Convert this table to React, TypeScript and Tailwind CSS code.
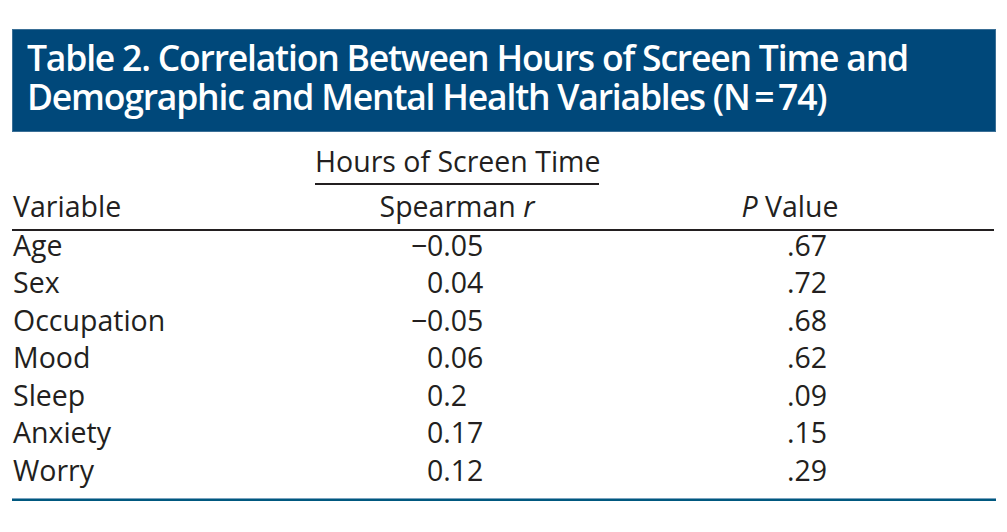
import React from 'react';

const rows: { name: string; sign: string; r: string; p: string }[] = [
  { name: 'Age', sign: '\u2212', r: '0.05', p: '.67' },
  { name: 'Sex', sign: '', r: '0.04', p: '.72' },
  { name: 'Occupation', sign: '\u2212', r: '0.05', p: '.68' },
  { name: 'Mood', sign: '', r: '0.06', p: '.62' },
  { name: 'Sleep', sign: '', r: '0.2', p: '.09' },
  { name: 'Anxiety', sign: '', r: '0.17', p: '.15' },
  { name: 'Worry', sign: '', r: '0.12', p: '.29' },
];

const App: React.FC = () => {
  return (
    <div className="w-[1007px] h-[532px] bg-white px-[12px] pt-[29px] font-['Open_Sans',sans-serif] text-[#231f20]">
      {/* Title bar */}
      <div className="h-[103px] w-[984px] bg-[#00487a] border border-[#3a6f96] pl-[14px] pt-[7.5px] text-white font-semibold text-[35.5px] leading-[39px] tracking-[-1.2px]">
        <div className="whitespace-nowrap">Table 2. Correlation Between Hours of Screen Time and</div>
        <div className="whitespace-nowrap">Demographic and Mental Health Variables (N{'\u2009'}={'\u2009'}74)</div>
      </div>

      {/* Table */}
      <div className="w-[982px] mt-[10px] text-[28.5px]">
        {/* Header row 1 */}
        <div className="flex leading-[38px]">
          <div className="w-[303px]" />
          <div className="w-[284px] text-center pb-[3px] border-b-2 border-[#231f20] whitespace-nowrap">
            Hours of Screen Time
          </div>
        </div>
        {/* Header row 2 */}
        <div className="flex leading-[38px] mt-[2px]">
          <div className="w-[303px] pl-px">Variable</div>
          <div className="w-[284px] text-center">
            Spearman <span className="italic">r</span>
          </div>
          <div className="w-[91px]" />
          <div className="w-[200px] text-center">
            <span className="italic">P</span> Value
          </div>
        </div>
        <div className="mt-[4px] h-[2px] bg-[#231f20]" />

        {/* Body */}
        <div className="-mt-[4.5px]">
          {rows.map((row) => (
            <div key={row.name} className="flex h-[37.6px] leading-[37.6px]">
              <div className="w-[399px] pl-px">{row.name}</div>
              <div className="w-[16px] text-right">{row.sign}</div>
              <div className="w-[360px]">{row.r}</div>
              <div className="flex-1">{row.p}</div>
            </div>
          ))}
        </div>
        <div className="mt-[8px] h-px w-[984px] bg-[#7aa3bf]" />
        <div className="h-[2px] w-[984px] bg-[#00587f]" />
      </div>
    </div>
  );
};

export default App;
